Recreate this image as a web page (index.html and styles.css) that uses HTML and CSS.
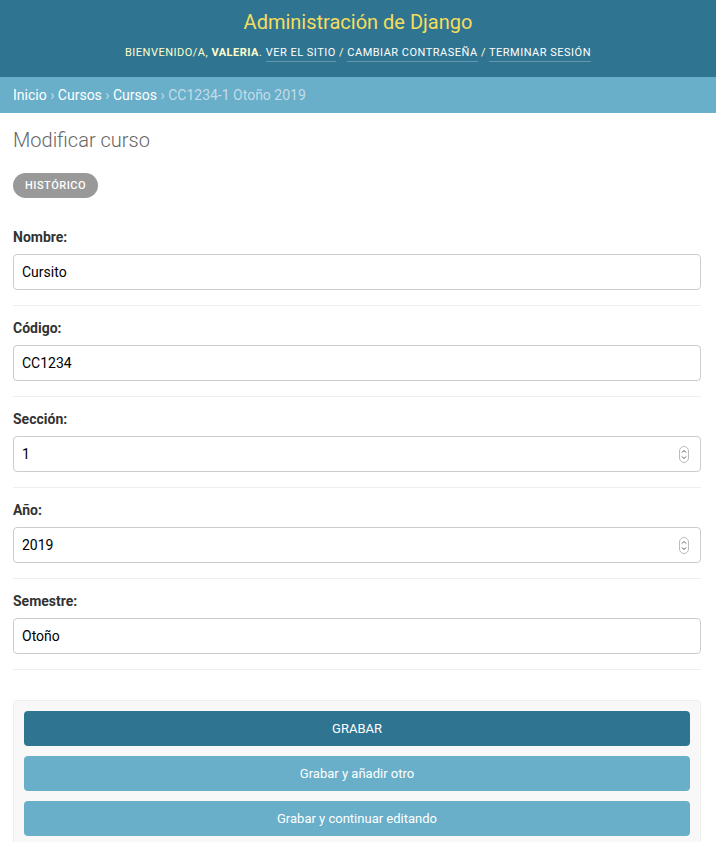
FILE: index.html
```html
<!DOCTYPE html>
<html lang="es">
<head>
<meta charset="utf-8">
<title>Modificar curso</title>
<link rel="stylesheet" href="styles.css">
</head>
<body>
<header class="header">
  <h1 class="brand">Administración de Django</h1>
  <div class="user-tools">BIENVENIDO/A, <strong>VALERIA</strong>. <a href="#">VER EL SITIO</a> / <a href="#">CAMBIAR CONTRASEÑA</a> / <a href="#">TERMINAR SESIÓN</a></div>
</header>
<nav class="breadcrumbs"><a href="#">Inicio</a> › <a href="#">Cursos</a> › <a href="#">Cursos</a> › CC1234-1 Otoño 2019</nav>
<main class="content">
  <h2 class="page-title">Modificar curso</h2>
  <div class="object-tools"><a href="#" class="history">HISTÓRICO</a></div>
  <form class="form">
    <div class="form-row">
      <label class="label">Nombre:</label>
      <div class="field"><input class="input" type="text" value="Cursito"></div>
    </div>
    <div class="form-row">
      <label class="label">Código:</label>
      <div class="field"><input class="input" type="text" value="CC1234"></div>
    </div>
    <div class="form-row">
      <label class="label">Sección:</label>
      <div class="field"><input class="input" type="text" value="1">
        <svg class="spinner" width="10" height="17" viewBox="0 0 10 17"><rect x="0.5" y="0.5" width="9" height="16" rx="4.5" fill="#fff" stroke="#bbb"/><path d="M3 6.5 L5 4.5 L7 6.5" fill="none" stroke="#555" stroke-width="1"/><path d="M3 10.5 L5 12.5 L7 10.5" fill="none" stroke="#555" stroke-width="1"/></svg>
      </div>
    </div>
    <div class="form-row">
      <label class="label">Año:</label>
      <div class="field"><input class="input" type="text" value="2019">
        <svg class="spinner" width="10" height="17" viewBox="0 0 10 17"><rect x="0.5" y="0.5" width="9" height="16" rx="4.5" fill="#fff" stroke="#bbb"/><path d="M3 6.5 L5 4.5 L7 6.5" fill="none" stroke="#555" stroke-width="1"/><path d="M3 10.5 L5 12.5 L7 10.5" fill="none" stroke="#555" stroke-width="1"/></svg>
      </div>
    </div>
    <div class="form-row">
      <label class="label">Semestre:</label>
      <div class="field"><input class="input" type="text" value="Otoño"></div>
    </div>
    <div class="submit-row">
      <button type="button" class="btn btn-default">GRABAR</button>
      <button type="button" class="btn">Grabar y añadir otro</button>
      <button type="button" class="btn">Grabar y continuar editando</button>
    </div>
  </form>
</main>
</body>
</html>
```
FILE: styles.css
```css
html, body {
  margin: 0;
  padding: 0;
  background: #fff;
  font-family: Roboto, "Liberation Sans", sans-serif;
  color: #333;
}
.header {
  background: #2f7592;
  height: 77px;
  box-sizing: border-box;
  padding-top: 10px;
  display: flex;
  flex-direction: column;
  align-items: center;
}
.brand {
  margin: 0;
  font-size: 20px;
  line-height: 24px;
  font-weight: 400;
  color: #f5dd5d;
}
.user-tools {
  margin-top: 12px;
  font-size: 11px;
  line-height: 14px;
  letter-spacing: 0.5px;
  color: #ffc;
}
.user-tools strong {
  font-weight: 700;
}
.user-tools a {
  color: #fff;
  text-decoration: none;
  border-bottom: 1px solid rgba(255,255,255,0.25);
  padding-bottom: 2px;
}
.breadcrumbs {
  background: #69afca;
  height: 36px;
  line-height: 36px;
  padding: 0 13px;
  font-size: 14px;
  color: #c4dce8;
}
.breadcrumbs a {
  color: #fff;
  text-decoration: none;
}
.content {
  padding: 15px 15px 0 13px;
}
.page-title {
  margin: 0;
  font-size: 20px;
  line-height: 24px;
  font-weight: 300;
  color: #666;
}
.object-tools {
  margin-top: 21px;
  margin-bottom: 17px;
  display: flex;
}
.history {
  display: block;
  background: #999;
  color: #fff;
  text-decoration: none;
  font-size: 11px;
  font-weight: 500;
  letter-spacing: 0.5px;
  line-height: 25px;
  padding: 0 12px;
  border-radius: 15px;
}
.form {
  margin: 0;
}
.form-row {
  padding: 13px 0 15px;
  border-bottom: 1px solid #eee;
}
.label {
  display: block;
  font-size: 14px;
  line-height: 18px;
  font-weight: 700;
  color: #333;
  margin-bottom: 8px;
}
.field {
  position: relative;
}
.input {
  display: block;
  width: 100%;
  box-sizing: border-box;
  height: 36px;
  border: 1px solid #ccc;
  border-radius: 4px;
  padding: 0 8px;
  font-family: Roboto, "Liberation Sans", sans-serif;
  font-size: 14px;
  color: #000;
  background: #fff;
}
.spinner {
  position: absolute;
  right: 12px;
  top: 10px;
}
.submit-row {
  margin-top: 30px;
  background: #f8f8f8;
  border: 1px solid #eee;
  border-radius: 4px;
  padding: 10px;
  display: flex;
  flex-direction: column;
  gap: 10px;
}
.btn {
  height: 35px;
  border: 0;
  border-radius: 4px;
  background: #69afca;
  color: #fff;
  font-family: Roboto, "Liberation Sans", sans-serif;
  font-size: 13px;
  cursor: pointer;
}
.btn-default {
  background: #2f7592;
}
```
